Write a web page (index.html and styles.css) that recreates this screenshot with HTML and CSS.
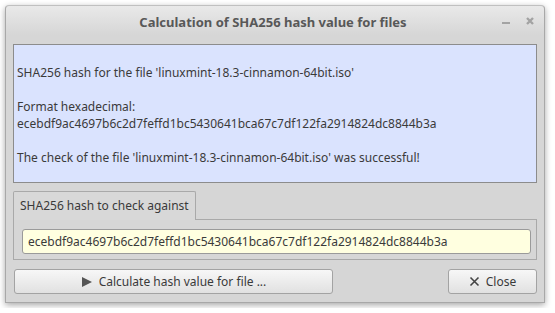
FILE: index.html
```html
<!DOCTYPE html>
<html lang="en">
<head>
  <meta charset="UTF-8">
  <title>SHA256 hash</title>
  <link rel="stylesheet" href="styles.css">
</head>
<body>

  <div class="window">
    <header class="titlebar">
      <span class="title">Calculation of SHA256 hash value for files</span>
      <span class="controls">
        <svg width="10" height="10" viewBox="0 0 10 10"><rect x="1" y="6" width="8" height="2" fill="#a3a3a3"/></svg>
        <svg width="10" height="10" viewBox="0 0 10 10"><path d="M2 2 L8 8 M8 2 L2 8" stroke="#a3a3a3" stroke-width="2.4"/></svg>
      </span>
    </header>

    <div class="content">
      <div class="result">
        <p>&nbsp;</p>
        <p>SHA256 hash for the file 'linuxmint-18.3-cinnamon-64bit.iso'</p>
        <p>&nbsp;</p>
        <p>Format hexadecimal:</p>
        <p>ecebdf9ac4697b6c2d7feffd1bc5430641bca67c7df122fa2914824dc8844b3a</p>
        <p>&nbsp;</p>
        <p>The check of the file 'linuxmint-18.3-cinnamon-64bit.iso' was successful!</p>
      </div>

      <div class="group">
        <div class="tabs">
          <span class="tab">SHA256 hash to check against</span>
          <span class="tab-rest"></span>
        </div>
        <div class="frame">
          <div class="input">ecebdf9ac4697b6c2d7feffd1bc5430641bca67c7df122fa2914824dc8844b3a</div>
        </div>
      </div>

      <div class="buttons">
        <button class="btn btn-calc">
          <svg width="12" height="12" viewBox="0 0 12 12"><path d="M1 1 L11 6 L1 11 Z" fill="#555"/></svg>
          Calculate hash value for file ...
        </button>
        <button class="btn btn-close">
          <svg width="11" height="11" viewBox="0 0 11 11"><path d="M1.5 1.5 L9.5 9.5 M9.5 1.5 L1.5 9.5" stroke="#444" stroke-width="1.6"/></svg>
          Close
        </button>
      </div>
    </div>
  </div>

</body>
</html>
```

FILE: styles.css
```css
body {
  font-family: 'Noto Sans', 'Open Sans', sans-serif;
  font-size: 12px;
  color: #3a3a3a;
  background-color: #fff;
  margin: 0;
  padding: 5px;
}

.window {
  width: 540px;
  height: 298px;
  box-sizing: border-box;
  background-color: #d6d6d6;
  border: 1px solid #a8a8a8;
  border-top-color: #c0c0c0;
  border-radius: 4px 4px 0 0;
  box-shadow: 0 2px 6px rgba(0, 0, 0, 0.35);
  display: flex;
  flex-direction: column;
}

.titlebar {
  height: 29px;
  display: flex;
  align-items: center;
  justify-content: center;
  position: relative;
  background: linear-gradient(#e9e9e9, #d6d6d6);
  border-radius: 4px 4px 0 0;
}

.title {
  font-weight: bold;
  font-size: 13px;
  color: #585858;
  padding-top: 2px;
  margin-right: 4px;
}

.controls {
  position: absolute;
  right: 9px;
  top: 10px;
  display: flex;
  gap: 14px;
}

.content {
  padding: 9px 7px 0 7px;
  display: flex;
  flex-direction: column;
}

.result {
  height: 139px;
  box-sizing: border-box;
  background-color: #dae3fe;
  border: 1px solid #8c8c8c;
  padding: 2px 3px;
}

.result p {
  margin: 0;
  line-height: 17px;
}

.group {
  margin-top: 8px;
}

.tabs {
  display: flex;
  height: 29px;
}

.tab {
  border: 1px solid #a9a9a9;
  border-bottom: none;
  border-radius: 2px 2px 0 0;
  padding: 5px 6px 0 6px;
  line-height: 17px;
  background-color: #d8d8d8;
}

.tab-rest {
  flex: 1;
  border-bottom: 1px solid #a9a9a9;
}

.frame {
  height: 40px;
  box-sizing: border-box;
  border: 1px solid #a9a9a9;
  border-top: none;
  padding: 9px 5px 0 8px;
}

.input {
  height: 25px;
  box-sizing: border-box;
  background-color: #ffffe0;
  border: 1px solid #9a9a9a;
  border-radius: 3px;
  padding: 0 5px;
  line-height: 23px;
}

.buttons {
  margin-top: 9px;
  display: flex;
  justify-content: space-between;
}

.btn {
  height: 25px;
  box-sizing: border-box;
  font-family: inherit;
  font-size: 12px;
  color: #3a3a3a;
  border: 1px solid #a3a3a3;
  border-radius: 3px;
  background: linear-gradient(#f7f7f7, #e1e1e1);
  display: flex;
  align-items: center;
  justify-content: center;
  gap: 6px;
  padding: 0;
}

.btn-calc {
  width: 319px;
  margin-left: 1px;
}

.btn-close {
  width: 89px;
}
```
